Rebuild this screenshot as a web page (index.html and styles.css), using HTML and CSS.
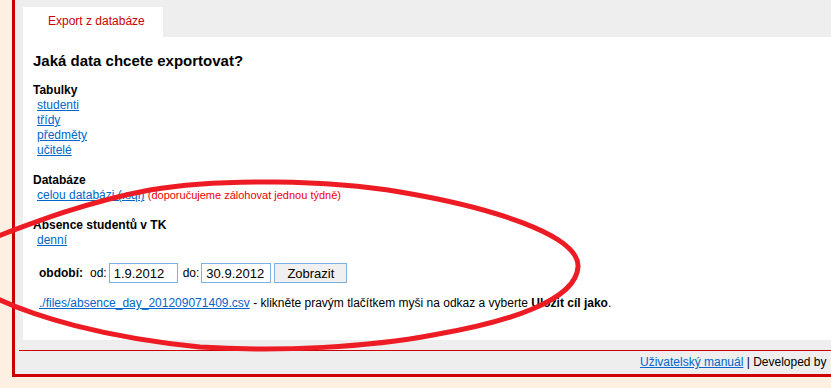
FILE: index.html
```html
<!DOCTYPE html>
<html lang="cs">
<head>
<meta charset="utf-8">
<title>Export z databáze</title>
<link rel="stylesheet" href="styles.css">
</head>
<body>
<div class="page">
  <div class="tabs">
    <div class="tab">Export z databáze</div>
  </div>
  <div class="content">
    <h1 class="title">Jaká data chcete exportovat?</h1>

    <div class="group">
      <div class="label">Tabulky</div>
      <a href="#">studenti</a>
      <a href="#">třídy</a>
      <a href="#">předměty</a>
      <a href="#">učitelé</a>
    </div>

    <div class="group">
      <div class="label">Databáze</div>
      <div class="line"><a href="#">celou databázi (.sql)</a> <span class="hint">(doporučujeme zálohovat jednou týdně)</span></div>
    </div>

    <div class="group">
      <div class="label">Absence studentů v TK</div>
      <a href="#">denní</a>
    </div>

    <form class="period">
      <span class="period-label">období:</span>
      <label class="field-label" for="od">od:</label>
      <input class="date date-from" id="od" type="text" value="1.9.2012">
      <label class="field-label field-label-do" for="do">do:</label>
      <input class="date date-to" id="do" type="text" value="30.9.2012">
      <button class="btn" type="button">Zobrazit</button>
    </form>

    <p class="note"><a href="#">./files/absence_day_201209071409.csv</a> - klikněte pravým tlačítkem myši na odkaz a vyberte <b>Uložit cíl jako</b>.</p>
  </div>
  <div class="footer"><a href="#">Uživatelský manuál</a> | Developed by</div>
</div>

<svg class="annotation" width="831" height="388" viewBox="0 0 831 388" aria-hidden="true">
  <path d="M -20 243 C 20 228, 80 203, 150 190 C 220 178, 330 180, 400 192 C 490 207, 580 235, 578 267 C 576 300, 510 322, 433 335 C 370 347, 280 352, 200 347 C 110 338, 30 318, -20 290" />
</svg>
</body>
</html>
```

FILE: styles.css
```css
html, body {
  margin: 0;
  padding: 0;
  overflow: hidden;
}

body {
  background: #fdefe1;
  font-family: "Liberation Sans", Arial, sans-serif;
  font-size: 12px;
  line-height: 15px;
  color: #000;
  position: relative;
  height: 388px;
}

a {
  color: #0066cc;
  text-decoration: underline;
}

.page {
  margin-left: 12px;
  border-left: 3px solid #cc0000;
  border-bottom: 3px solid #cc0000;
  background: #eeeeee;
}

.tabs {
  display: flex;
  padding: 7px 0 0 8px;
}

.tab {
  width: 140px;
  box-sizing: border-box;
  padding-left: 25px;
  height: 30px;
  line-height: 28px;
  background: #fff;
  color: #cc0000;
  font-size: 12px;
}

.content {
  margin-left: 8px;
  background: #fff;
  padding: 15px 10px 29px 10px;
}

.title {
  margin: 0 0 13px 0;
  font-size: 15px;
  line-height: 18px;
  font-weight: bold;
}

.group {
  display: flex;
  flex-direction: column;
  align-items: flex-start;
  margin-bottom: 15px;
}

.group > a,
.group > .line {
  margin-left: 4px;
}

.label {
  font-weight: bold;
}

.hint {
  color: #ee0000;
  font-size: 11px;
}

.period {
  display: flex;
  align-items: center;
  margin: 14px 0 0 6px;
  height: 20px;
}

.period-label {
  font-weight: bold;
  margin-right: 7px;
}

.field-label {
  margin-right: 2px;
}

.field-label-do {
  margin-left: 5px;
  margin-right: 2px;
}

.date {
  box-sizing: border-box;
  height: 20px;
  border: 1px solid #7ab3e3;
  padding: 0 4px;
  font-family: "Liberation Sans", Arial, sans-serif;
  font-size: 13px;
  color: #000;
  background: #fff;
  margin: 0;
  outline: none;
}

.date-from {
  width: 69px;
}

.date-to {
  width: 70px;
}

.btn {
  box-sizing: border-box;
  width: 73px;
  height: 20px;
  margin: 0 0 0 3px;
  padding: 0;
  border: 1px solid #7ab3e3;
  background: #f0f0f0;
  font-family: "Liberation Sans", Arial, sans-serif;
  font-size: 13px;
  color: #000;
}

.note {
  margin: 13px 0 0 6px;
}

.footer {
  margin: 10px 0 0 4px;
  border-top: 1px solid #cc0000;
  height: 23px;
  line-height: 23px;
  padding-left: 621px;
  white-space: nowrap;
  overflow: hidden;
}

.annotation {
  position: absolute;
  left: 0;
  top: 0;
  pointer-events: none;
}

.annotation path {
  fill: none;
  stroke: #ed1c24;
  stroke-width: 5;
  stroke-linecap: round;
}
```
